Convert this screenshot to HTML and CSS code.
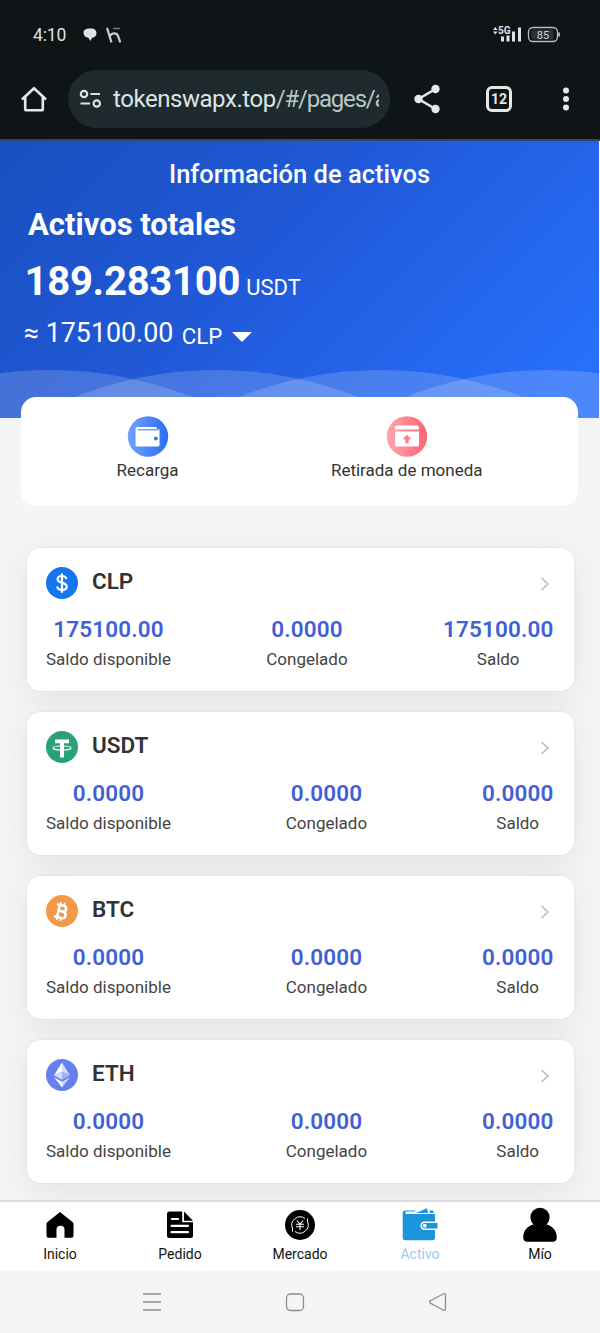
FILE: index.html
```html
<!DOCTYPE html>
<html lang="es">
<head>
<meta charset="utf-8">
<title>Información de activos</title>
<link rel="stylesheet" href="styles.css">
</head>
<body>
<div class="screen">
  <header class="browser">
    <div class="status">
      <span class="clock">4:10</span>
      <svg class="status-notes" width="42" height="20" viewBox="0 0 42 20">
        <path d="M2.500 7.500C2.500 5 5 3.500 8.500 3.500h1.500c3.500 0 5.500 2 5.500 4.500 0 3-2 4.800-4.500 4.800L9.500 16l-2.200-3.200C4.500 12.500 2.500 10.500 2.500 7.500z" fill="#dfe3e4"/>
        <path d="M26 2.800l4.500 14.500M29 11c2-3.500 7-3.500 8 0l2.300 6.300" fill="none" stroke="#c9c7da" stroke-width="2.200"/>
        <path d="M32 3.500h7" stroke="#75748a" stroke-width="1.500"/>
      </svg>
      <svg class="status-radio" width="70" height="20" viewBox="0 0 70 20">
        <path d="M1 5L3.300 2l2.300 3zM1 6.500l2.300 3 2.300-3z" fill="#dfe3e4"/>
        <text x="6" y="8.500" class="radio-text">5G</text>
        <path d="M10.500 11.500v5M16 10.500v6M21.500 6.500v10M27.500 2.500v14" stroke="#dfe3e4" stroke-width="3"/>
        <rect x="36.500" y="2.500" width="29" height="14" rx="4.500" fill="none" stroke="#b9bec0" stroke-width="1.300"/>
        <rect x="39.500" y="4.500" width="22" height="10" rx="2" fill="#2c3134"/>
        <path d="M67 7.500v4" stroke="#b9bec0" stroke-width="1.800"/>
        <text x="51" y="13.500" text-anchor="middle" class="battery-text">85</text>
      </svg>
    </div>
    <div class="toolbar">
      <svg class="home" width="28" height="28" viewBox="0 0 28 28"><path d="M2 14.500L14 3.200l12 11.300M5.200 12.500V24c0 .8.500 1.300 1.300 1.300h15c.8 0 1.300-.5 1.300-1.300V12.500" fill="none" stroke="#e3e8e8" stroke-width="2.600" stroke-linejoin="round"/></svg>
      <div class="address">
        <svg width="24" height="20" viewBox="0 0 24 20"><g fill="none" stroke="#dbe2e2" stroke-width="2.200"><circle cx="5" cy="5" r="3.200"/><path d="M11.500 5H21M1.500 14.500H11"/><circle cx="17.800" cy="14.500" r="3.200"/></g></svg>
        <span class="url"><b>tokenswapx.top</b>/#/pages/a</span>
      </div>
      <svg class="share" width="28" height="30" viewBox="0 0 28 30"><path d="M22.500 5L5.500 15l17 10" fill="none" stroke="#e3e8e8" stroke-width="2.600"/><g fill="#e3e8e8"><circle cx="22.500" cy="5" r="4.200"/><circle cx="5.500" cy="15" r="4.200"/><circle cx="22.500" cy="25" r="4.200"/></g></svg>
      <span class="tabs-count">12</span>
      <svg class="more" width="8" height="26" viewBox="0 0 8 26"><g fill="#e3e8e8"><circle cx="4" cy="4.500" r="3"/><circle cx="4" cy="13" r="3"/><circle cx="4" cy="21.500" r="3"/></g></svg>
    </div>
  </header>

  <main class="page">
    <section class="hero">
      <svg class="waves" width="599" height="48" viewBox="0 0 599 48"><g fill="#fff" fill-opacity=".17"><circle cx="50" cy="387" r="387"/><circle cx="216.500" cy="387" r="387"/><circle cx="381" cy="387" r="387"/><circle cx="547" cy="387" r="387"/></g></svg>
      <h1 class="hero-title">Información de activos</h1>
      <h2 class="hero-sub">Activos totales</h2>
      <p class="total"><strong>189.283100</strong><span>USDT</span></p>
      <p class="approx"><span class="approx-value">≈ 175100.00</span><span class="approx-unit">CLP</span><i class="caret"></i></p>
    </section>

    <section class="actions">
      <div class="action">
        <svg width="42" height="42" viewBox="0 0 42 42"><defs><linearGradient id="gb"><stop offset="0" stop-color="#72a2ff"/><stop offset="1" stop-color="#2c6cf3"/></linearGradient></defs><circle cx="21" cy="21.500" r="20.200" fill="url(#gb)"/><path d="M10 12h18.500a1.500 1.500 0 0 1 1.500 1.500v1h2.500V30a1.500 1.500 0 0 1-1.500 1.500H10A1.500 1.500 0 0 1 8.500 30V13.500A1.500 1.500 0 0 1 10 12z" fill="#fff"/><path d="M11 14.700h20" stroke="#6d9ef8" stroke-width="1.500"/><circle cx="28.800" cy="23.500" r="1.900" fill="#3875f5"/></svg>
        <span>Recarga</span>
      </div>
      <div class="action">
        <svg width="42" height="42" viewBox="0 0 42 42"><defs><linearGradient id="gr"><stop offset="0" stop-color="#ffa5ad"/><stop offset="1" stop-color="#fb6672"/></linearGradient></defs><circle cx="21" cy="21.500" r="20.200" fill="url(#gr)"/><path d="M9 14.500v-2a2 2 0 0 1 2-2h20a2 2 0 0 1 2 2v2zM9 16.500h24V30a1.500 1.500 0 0 1-1.500 1.500h-21A1.500 1.500 0 0 1 9 30z" fill="#fff"/><path d="M21 20l3.600 4h-2.200v4h-2.800v-4h-2.200z" fill="#f97f8b" stroke="#f97f8b" stroke-width=".6"/></svg>
        <span>Retirada de moneda</span>
      </div>
    </section>

    <section class="assets">
      <article class="asset">
        <div class="asset-head">
          <svg width="32" height="32" viewBox="0 0 32 32"><circle cx="16" cy="16" r="16" fill="#1676ee"/><path d="M20.500 12c-.5-1.900-2.200-3-4.500-3-2.500 0-4.300 1.200-4.300 3.300 0 4.600 9 2.600 9 7.200 0 2.200-1.900 3.500-4.600 3.500-2.600 0-4.400-1.200-4.900-3.500M16 6.500v19.300" fill="none" stroke="#fff" stroke-width="2.200"/></svg>
          <h3>CLP</h3>
          <svg class="chevron" width="10" height="16" viewBox="0 0 10 16"><path d="M1.500 2L8 8l-6.500 6" fill="none" stroke="#bbb" stroke-width="1.600"/></svg>
        </div>
        <div class="figures">
          <div><b>175100.00</b><span>Saldo disponible</span></div>
          <div><b>0.0000</b><span>Congelado</span></div>
          <div><b>175100.00</b><span>Saldo</span></div>
        </div>
      </article>
      <article class="asset">
        <div class="asset-head">
          <svg width="32" height="32" viewBox="0 0 32 32"><circle cx="16" cy="16" r="16" fill="#29a17a"/><path d="M9 8.500h14v3.700h-5v14.300h-4V12.200H9z" fill="#fff"/><ellipse cx="16" cy="17" rx="9" ry="2" fill="none" stroke="#fff" stroke-width="1.200"/></svg>
          <h3>USDT</h3>
          <svg class="chevron" width="10" height="16" viewBox="0 0 10 16"><path d="M1.500 2L8 8l-6.500 6" fill="none" stroke="#bbb" stroke-width="1.600"/></svg>
        </div>
        <div class="figures">
          <div><b>0.0000</b><span>Saldo disponible</span></div>
          <div><b>0.0000</b><span>Congelado</span></div>
          <div><b>0.0000</b><span>Saldo</span></div>
        </div>
      </article>
      <article class="asset">
        <div class="asset-head">
          <svg width="32" height="32" viewBox="0 0 32 32"><circle cx="16" cy="16" r="16" fill="#f2994a"/><g transform="rotate(14 16 16)" fill="none" stroke="#fff"><path d="M9.500 10.500h6.800c4.300 0 4.300 5.900 0 5.900h-4 4.700c4.700 0 4.700 6.600 0 6.600H9.500M12.500 10.500V23" stroke-width="2.500"/><path d="M13 7.500v3M16.800 7.500v3M13 23v3M16.800 23v3" stroke-width="1.800"/></g></svg>
          <h3>BTC</h3>
          <svg class="chevron" width="10" height="16" viewBox="0 0 10 16"><path d="M1.500 2L8 8l-6.500 6" fill="none" stroke="#bbb" stroke-width="1.600"/></svg>
        </div>
        <div class="figures">
          <div><b>0.0000</b><span>Saldo disponible</span></div>
          <div><b>0.0000</b><span>Congelado</span></div>
          <div><b>0.0000</b><span>Saldo</span></div>
        </div>
      </article>
      <article class="asset">
        <div class="asset-head">
          <svg width="32" height="32" viewBox="0 0 32 32"><circle cx="16" cy="16" r="16" fill="#6680f0"/><path d="M16 3.500L8 16.200l8-3.400z" fill="#fff"/><path d="M16 3.500l8 12.700-8-3.400z" fill="#d5dcfb"/><path d="M8 16.200l8-3.400v8z" fill="#d5dcfb"/><path d="M24 16.200l-8-3.400v8z" fill="#a5b3f6"/><path d="M8 18.200l8 4.500v5.800z" fill="#fff"/><path d="M24 18.200l-8 4.500v5.800z" fill="#d0d8fb"/></svg>
          <h3>ETH</h3>
          <svg class="chevron" width="10" height="16" viewBox="0 0 10 16"><path d="M1.500 2L8 8l-6.500 6" fill="none" stroke="#bbb" stroke-width="1.600"/></svg>
        </div>
        <div class="figures">
          <div><b>0.0000</b><span>Saldo disponible</span></div>
          <div><b>0.0000</b><span>Congelado</span></div>
          <div><b>0.0000</b><span>Saldo</span></div>
        </div>
      </article>
    </section>
  </main>

  <nav class="tabbar">
    <a class="tab"><svg width="36" height="36" viewBox="0 0 36 36"><path d="M18 5L30.500 15c.7.600 1 1 1 2v11.800c0 1.300-.7 2-2 2h-7v-8a4 4 0 0 0-8 0v8H6.500c-1.300 0-2-.7-2-2V17c0-1 .3-1.400 1-2z"/></svg><span>Inicio</span></a>
    <a class="tab"><svg width="36" height="36" viewBox="0 0 36 36"><path d="M7.500 4.500h12.700v10.700H31v13.300a2.500 2.500 0 0 1-2.500 2.500h-21A2.500 2.500 0 0 1 5 28.500V7a2.500 2.500 0 0 1 2.500-2.500z"/><path d="M22 4.500l9 9.200h-9z"/><path d="M10 12h6M9.500 18.800h16.500M9.500 25.200h16.500" stroke="#fff" stroke-width="2.200" stroke-linecap="round"/></svg><span>Pedido</span></a>
    <a class="tab"><svg width="36" height="36" viewBox="0 0 36 36"><circle cx="18" cy="18" r="15"/><g fill="none" stroke="#fff"><path d="M10.500 21.500a8.300 8.300 0 0 1 12.500-10M25.500 14.500a8.300 8.300 0 0 1-12.500 10M10.500 24.500v-3.500M25.500 11.500v3.500" stroke-width="1"/><path d="M14.800 13.500l3.200 3.500 3.200-3.500M14 17.300h8M14 19.800h8M18 17v6" stroke-width="1.100"/></g></svg><span>Mercado</span></a>
    <a class="tab tab-active"><svg width="36" height="36" viewBox="0 0 36 36"><path d="M3.500 3.500H14l-1.500 1H4c-.8 0-.8 2.500 0 2.500h29v7.500H22.500c-5.500 0-5.500 8.500 0 8.500H33v7.500c0 1.500-.8 2.800-2.300 2.800H3C1.500 33.300.7 32 .7 30.500V6C.7 4.400 1.500 3.500 3.500 3.500z"/><path d="M14 6L25 1.200 26 6zM27.500 3.500h3.500L32 6h-4z"/><path d="M22.500 16h13v5.500h-13c-3.500 0-3.500-5.500 0-5.500z"/><circle cx="22.700" cy="18.700" r="1.900" fill="#fff"/></svg><span>Activo</span></a>
    <a class="tab"><svg width="36" height="36" viewBox="0 0 36 36"><ellipse cx="18" cy="10.500" rx="9.600" ry="9.800"/><path d="M11 17.500c4 3 10 3 14 0 5.500 1.500 9.500 6 9.800 12.500.1 3-1.300 4.800-4 4.800H5.200c-2.700 0-4.100-1.800-4-4.800C1.500 23.500 5.500 19 11 17.500z"/></svg><span>Mío</span></a>
  </nav>

  <footer class="sysnav">
    <svg width="20" height="20" viewBox="0 0 20 20"><path d="M1 2h18M1 10h18M1 18h18"/></svg>
    <svg width="20" height="20" viewBox="0 0 20 20"><rect x="1.500" y="2" width="17" height="16.500" rx="4"/></svg>
    <svg width="20" height="20" viewBox="0 0 20 20"><path d="M17.500 3v14c0 1.200-.9 1.700-2 1.200L2.500 11.300c-1.200-.6-1.200-2 0-2.600l13-6.900c1.100-.5 2 0 2 1.200z"/></svg>
  </footer>
</div>
</body>
</html>
```
FILE: styles.css
```css
* { box-sizing: border-box; margin: 0; padding: 0; }
body { background: #f5f5f5; font-family: Roboto, "Noto Sans", sans-serif; color: #333; }
svg { display: block; flex: none; }
.screen { display: flex; flex-direction: column; width: 600px; height: 1333px; overflow: hidden; }

.browser { flex: none; height: 141px; background: #0f1416; border-bottom: 2px solid #35466b; }
.status { display: flex; align-items: center; height: 70px; padding: 0 38px 0 33px; }
.clock { font-size: 17.5px; line-height: 20px; color: #dfe3e4; letter-spacing: -.1px; width: 48px; }
.status-radio { margin-left: auto; }
.radio-text { font: bold 10px Roboto, sans-serif; fill: #dfe3e4; }
.battery-text { font: 11px Roboto, sans-serif; fill: #cdd1d3; }
.toolbar { display: flex; align-items: center; height: 58px; padding-left: 20px; }
.address { display: flex; align-items: center; gap: 10px; width: 322px; height: 58px; margin-left: 20px; padding: 0 11px; border-radius: 29px; background: #1e2a2d; }
.url { width: 267px; overflow: hidden; white-space: nowrap; font-size: 24px; line-height: 34px; letter-spacing: -1.2px; color: #b9c6c7; }
.url b { font-weight: 400; letter-spacing: -.45px; color: #dbe5e5; }
.share { margin-left: 23px; }
.tabs-count { width: 26px; height: 26px; margin-left: 45px; border: 3px solid #e3e8e8; border-radius: 6px; font-size: 14px; font-weight: 700; line-height: 21px; text-align: center; color: #e3e8e8; }
.more { margin-left: 50px; }

.page { flex: none; height: 1059px; overflow: hidden; }
.hero { position: relative; width: 599px; height: 277px; background: linear-gradient(135deg, #1a4fbf 0%, #2058d6 40%, #2870fc 95%); color: #fff; }
.waves { position: absolute; left: 0; bottom: 0; }
.hero-title { padding-top: 17px; font-size: 25.5px; font-weight: 500; line-height: 32px; text-align: center; }
.hero-sub { padding: 15px 0 0 28px; font-size: 31px; font-weight: 700; line-height: 40px; }
.total { display: flex; align-items: baseline; gap: 6px; height: 63px; padding: 12px 0 0 24.5px; line-height: 50px; }
.total strong { font-size: 40px; letter-spacing: -.25px; }
.total span { font-size: 22px; }
.approx { display: flex; align-items: center; height: 50px; padding-left: 24px; }
.approx-value { font-size: 26.8px; line-height: 32px; }
.approx-unit { margin: 5px 0 0 8.5px; font-size: 22.3px; line-height: 30px; }
.caret { margin: 8px 0 0 10px; border: solid transparent; border-width: 10px 10px 0; border-top-color: #fff; }

.actions { position: relative; display: flex; justify-content: space-between; width: 557px; height: 109px; margin: -21px 0 0 21px; padding: 18px 95.5px 0; border-radius: 15px; background: #fff; }
.action { display: flex; flex-direction: column; align-items: center; font-size: 17px; line-height: 24px; }
.action svg { margin-bottom: 1px; }

.assets { display: flex; flex-direction: column; gap: 21px; margin: 41.5px 26.5px 0 26.5px; isolation: isolate; }
.asset { position: relative; height: 143px; padding: 19px 20px 20px 19.5px; border-radius: 14px; background: #fff; }
.asset::before { content: ""; position: absolute; inset: 0; z-index: -1; border-radius: 14px; box-shadow: 0 0 1px 1px rgba(0,0,0,.03), 0 8px 36px rgba(0,0,0,.08); }
.asset-head { display: flex; align-items: flex-start; height: 46px; }
.asset-head h3 { margin: 0 0 0 14px; font-size: 22.5px; font-weight: 600; line-height: 29px; }
.chevron { margin: 9px 4px 0 auto; }
.figures { display: flex; justify-content: space-between; }
.figures div { display: flex; flex-direction: column; align-items: center; }
.figures b { font-size: 22.5px; font-weight: 600; line-height: 33px; color: #425fd5; letter-spacing: .15px; }
.figures span { font-size: 17px; line-height: 26px; color: #444; }

.tabbar { flex: none; display: flex; height: 71px; border-top: 2px solid #d9d9d9; background: #fff; }
.tab { flex: 1; display: flex; flex-direction: column; align-items: center; padding-top: 5px; font-size: 14px; line-height: 20px; color: #111; }
.tab svg { margin-bottom: 1px; fill: #000; }
.tab-active { color: #a3c9ee; }
.tab-active svg { fill: #1b94db; }
.sysnav { display: flex; height: 62px; padding: 21px 0 0 142px; gap: 123px; }
.sysnav svg { fill: none; stroke: #8c8c8c; stroke-width: 1.300; }
```
